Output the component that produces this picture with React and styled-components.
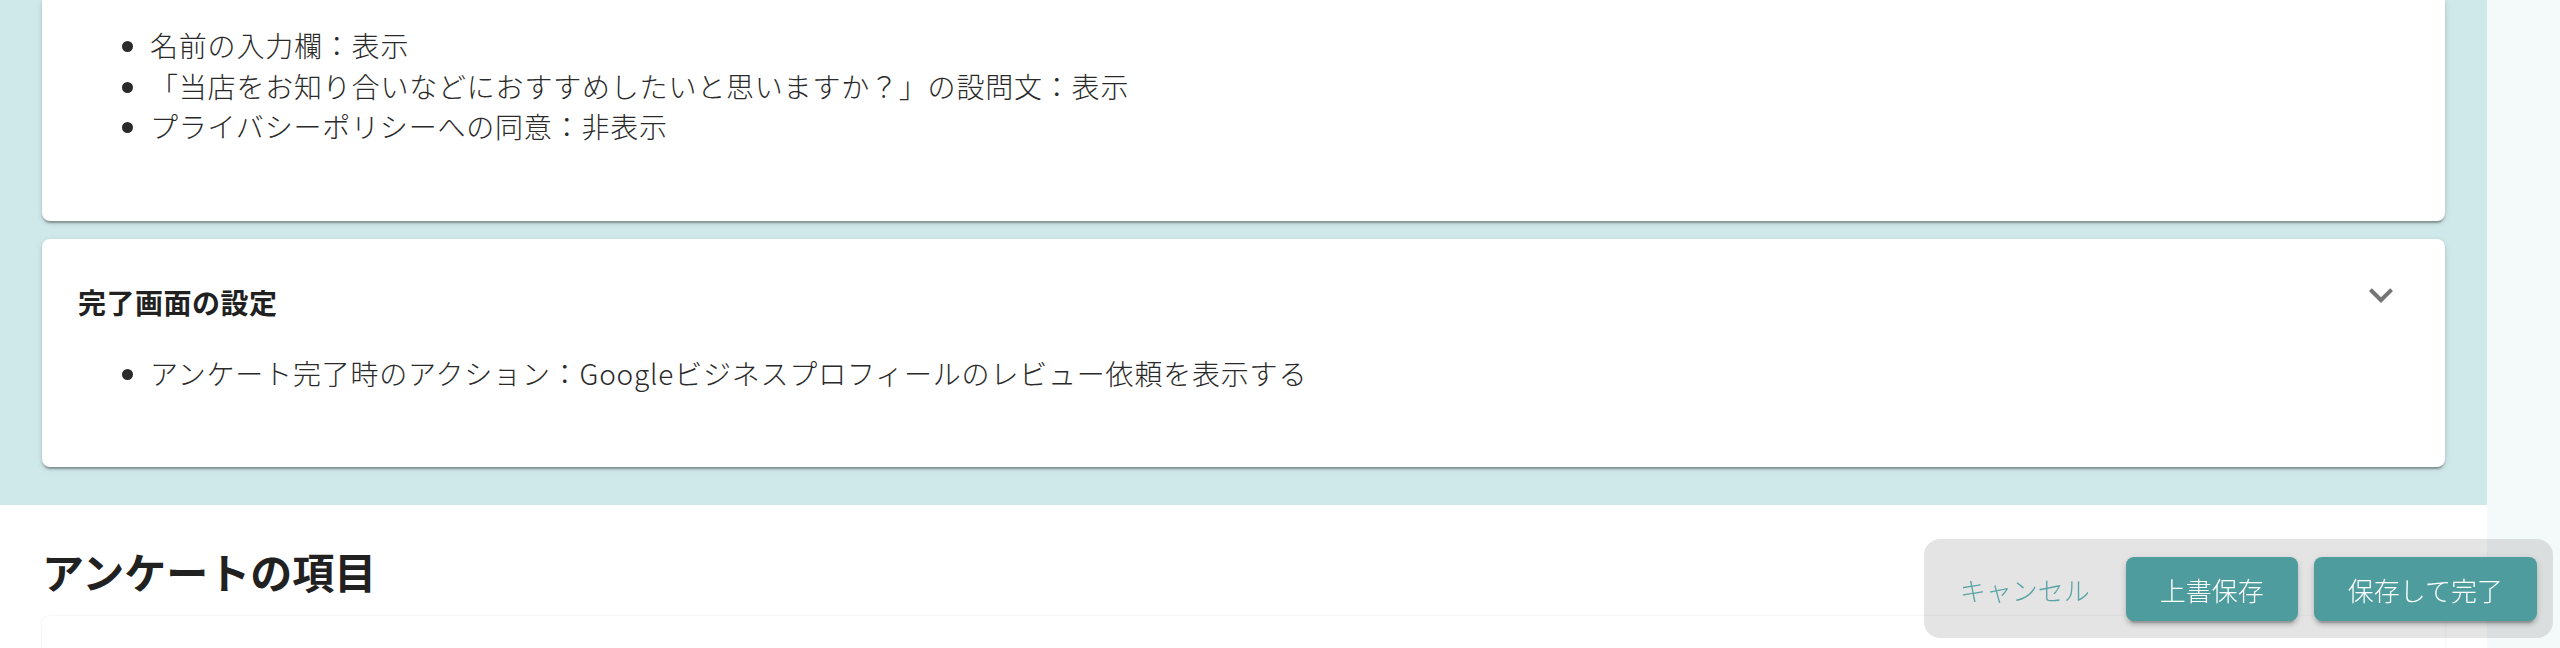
import React from "react"
import styled, { createGlobalStyle } from "styled-components"

const GlobalStyle = createGlobalStyle`
  html, body {
    margin: 0;
    padding: 0;
    background: #ffffff;
  }
  body {
    font-family: "Noto Sans CJK JP", "Noto Sans", Roboto, sans-serif;
    color: rgba(0, 0, 0, 0.87);
  }
`

const Page = styled.div`
  display: flex;
  min-height: 648px;
`

const Main = styled.main`
  flex: 1;
  display: flex;
  flex-direction: column;
`

const SideStrip = styled.aside`
  width: 73px;
  flex-shrink: 0;
  background: #f4f9f9;
`

const SettingsArea = styled.section`
  background: #cfe8e9;
  padding: 0 42px 38px;
  display: flex;
  flex-direction: column;
  gap: 18px;
`

const Card = styled.div`
  background: #ffffff;
  border-radius: ${props => (props.cut ? "0 0 8px 8px" : "8px")};
  box-shadow: 0px 4px 2px -2px rgba(0, 0, 0, 0.2),
    0px 2px 2px 0px rgba(0, 0, 0, 0.14), 0px 2px 6px 0px rgba(0, 0, 0, 0.12);
  padding: ${props => props.pad || "0 36px 74px"};
`

const CardHeader = styled.div`
  display: flex;
  justify-content: space-between;
  align-items: flex-start;
  padding-top: 43px;
`

const CardTitle = styled.h3`
  margin: 0;
  font-size: 28px;
  line-height: 40px;
  font-weight: 700;
  letter-spacing: 0.5px;
  color: #212121;
`

const ExpandIcon = styled.svg`
  width: 48px;
  height: 48px;
  margin: -11px 4px 0 0;
  fill: #757575;
`

const List = styled.ul`
  margin: ${props => props.top || "0"} 0 0;
  padding-left: 72px;
  font-size: 28px;
  font-weight: 300;
  line-height: 40.5px;
  letter-spacing: 0.8px;
  color: #2a2a2a;
`

const ItemsArea = styled.section`
  background: #ffffff;
  padding: 34px 42px 0;
`

const SectionTitle = styled.h2`
  margin: 0 0 13px;
  font-size: 42px;
  line-height: 64px;
  font-weight: 700;
  color: #212121;
`

const ItemsCard = styled.div`
  height: 220px;
  background: #ffffff;
  border-radius: 8px;
  box-shadow: 0px 0px 3px 0px rgba(0, 0, 0, 0.08);
`

const ActionBar = styled.div`
  position: fixed;
  right: 7px;
  bottom: 10px;
  display: flex;
  align-items: center;
  gap: 16px;
  padding: 18px 16px 17px;
  border-radius: 16px;
  background: rgba(0, 0, 0, 0.105);
`

const Button = styled.button`
  height: 64px;
  padding: 0 ${props => (props.text ? "20px" : "34px")};
  border: none;
  border-radius: 8px;
  font-family: "Noto Sans CJK JP", "Noto Sans", sans-serif;
  font-size: 26px;
  font-weight: 300;
  letter-spacing: 0;
  cursor: pointer;
  color: ${props => (props.text ? "#5aa3a5" : "#ffffff")};
  background: ${props => (props.text ? "transparent" : "#4e9c9e")};
  box-shadow: ${props =>
    props.text
      ? "none"
      : "0px 6px 2px -4px rgba(0,0,0,0.2), 0px 4px 4px 0px rgba(0,0,0,0.14), 0px 2px 10px 0px rgba(0,0,0,0.12)"};
`

const formItems = [
  "名前の入力欄：表示",
  "「当店をお知り合いなどにおすすめしたいと思いますか？」の設問文：表示",
  "プライバシーポリシーへの同意：非表示",
]

export default function App() {
  return (
    <>
      <GlobalStyle />
      <Page>
        <Main>
          <SettingsArea>
            <Card cut pad="25px 36px 74px">
              <List>
                {formItems.map(item => (
                  <li key={item}>{item}</li>
                ))}
              </List>
            </Card>
            <Card>
              <CardHeader>
                <CardTitle>完了画面の設定</CardTitle>
                <ExpandIcon viewBox="0 0 24 24">
                  <path d="M16.59 8.59 12 13.17 7.41 8.59 6 10l6 6 6-6z" />
                </ExpandIcon>
              </CardHeader>
              <List top="31px">
                <li>
                  アンケート完了時のアクション：Googleビジネスプロフィールのレビュー依頼を表示する
                </li>
              </List>
            </Card>
          </SettingsArea>
          <ItemsArea>
            <SectionTitle>アンケートの項目</SectionTitle>
            <ItemsCard />
          </ItemsArea>
        </Main>
        <SideStrip />
      </Page>
      <ActionBar>
        <Button text>キャンセル</Button>
        <Button>上書保存</Button>
        <Button>保存して完了</Button>
      </ActionBar>
    </>
  )
}
